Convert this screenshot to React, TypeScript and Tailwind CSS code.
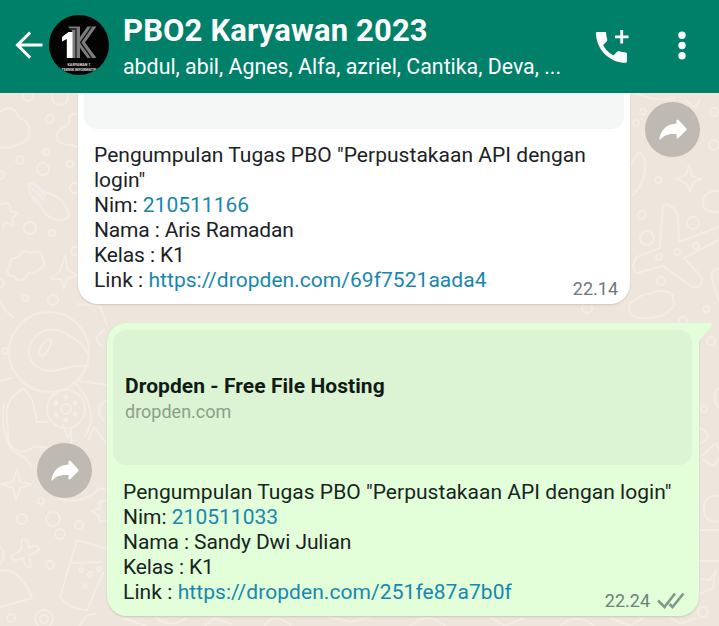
import React from "react";

function Wallpaper() {
  return (
    <svg className="absolute inset-0" width="719" height="533" viewBox="0 93 719 533" fill="none" stroke="#f4ede6" strokeWidth="2" strokeLinecap="round" strokeLinejoin="round">
      <path d="M0 112C5 108 10 107 14 110C18 112 17 117 21 119C28 121 31 128 29 135C27 142 22 143 17 145C11 147 8 149 0 147" />
      <path d="M77 114C73 113 69 115 69 119C70 123 69 125 64 127C57 130 55 136 58 141C62 146 69 143 77 147" />
      <path d="M29 184C36 181 39 192 51 194C61 197 67 207 69 215C66 221 58 222 50 217C43 213 42 207 37 203C31 199 28 190 29 184Z" />
      <path d="M31 187L44 200M36 186L45 195M31 195L41 204" stroke="#f1eae6" strokeWidth="3" />
      <path d="M0 204L9 203L11 211L17 213L12 219L14 226L5 222L3 228" />
      <path d="M22 252C26 249 29 255 34 252C39 251 43 254 43 259C46 264 43 269 38 270C35 273 32 275 29 272C24 282 17 282 14 276C6 277 6 271 10 267C8 261 12 257 17 258Z" />
      <path d="M65 256L68 270L77 275L67 279L64 289L61 279L51 279L60 271Z" />
      <path d="M0 301L4 309L13 317" />
      <circle cx="49" cy="352" r="40" />
      <path d="M45 330C34 335 28 345 29 354C31 366 42 371 51 371C62 371 66 364 88 366M45 330C60 327 81 340 88 354" />
      <path d="M50 339C44 340 37 350 40 355C45 360 54 341 50 339Z" />
      <path d="M0 381L12 378M79 381L108 385M23 389C13 394 7 402 7 414L8 439C12 451 21 456 33 447C42 445 47 450 53 447M23 389C33 394 34 408 37 422L47 422M4 404C1 422 5 438 10 447C14 457 26 452 31 467M76 384C91 399 96 420 85 436" />
      <circle cx="66" cy="409" r="19" /><circle cx="66" cy="409" r="5" />
      <g strokeWidth="3"><circle cx="66" cy="397" r="1" /><circle cx="75" cy="403" r="1" /><circle cx="75" cy="414" r="1" /><circle cx="66" cy="420" r="1" /><circle cx="56" cy="415" r="1" /><circle cx="56" cy="403" r="1" /></g>
      <path d="M63 425L68 438L71 430L71 445M88 440L94 427L106 443M108 400C98 403 96 414 104 420M58 498C75 504 92 498 99 488L107 490" />
      <path d="M17 469L20 482L32 484L20 488L16 500L13 488L1 484L13 482Z" />
      <path d="M108 500L99 502L100 508L92 511L99 516L100 522L107 520" />
      <path d="M22 540C24 536 28 539 29 548C36 543 42 548 37 552L29 555L31 565C29 569 25 568 23 558C15 562 9 559 13 555L21 550Z" />
      <path d="M77 540L107 549M77 540L60 597C65 605 76 609 87 610L103 573M71 563L101 562" />
      <path d="M0 571C15 567 27 583 32 598L0 607M0 546C5 553 5 558 0 564" />
      <circle cx="44" cy="619" r="9" /><circle cx="44" cy="619" r="4" /><path d="M95 614C85 613 83 621 80 626M124 618L146 626M156 617C164 625 176 626 186 618M205 626L214 618L231 624M265 626C270 615 283 617 291 626M329 617L350 622L369 617M410 626C425 614 434 617 445 626M490 617L505 626L524 618M561 625C574 615 585 618 594 626M611 618L630 626L644 617M671 618L681 624L696 618" />
      <path d="M639 152C650 160 646 181 633 195M639 152L629 166" />
      <path d="M689 164L692 176L701 179L693 183L690 192L686 183L676 179L686 175Z" />
      <path d="M719 191C706 190 702 198 703 206C707 213 713 211 719 212" />
      <path d="M663 205C668 203 676 208 678 216L679 242L719 227M663 205L660 248L637 257C632 263 632 271 637 273L663 266L692 287C700 288 703 283 702 278L684 258L719 240" />
      <path d="M639 298C641 293 653 294 657 291C666 291 675 292 673 300C677 309 667 311 664 315C654 317 643 321 633 316C627 311 627 302 639 298Z" />
      <path d="M719 269C712 269 710 273 712 279L719 303M634 93C644 95 656 104 675 97M686 100L695 108L700 100M78 304L100 306L107 326M104 330C96 335 94 341 102 346" />
      <path d="M719 388C713 392 713 402 719 408M700 428C710 432 709 441 700 443M702 456L716 443L719 452M703 460L714 466L719 458M719 496C708 493 703 502 704 511C705 520 712 523 719 521M700 530H719M700 561H719M702 579L710 580L716 570L713 588L700 594" />
      <g>
        <circle cx="28" cy="96" r="5" /><circle cx="60" cy="97" r="8" /><circle cx="50" cy="119" r="4" /><circle cx="46" cy="152" r="3" /><circle cx="20" cy="160" r="4" /><circle cx="43" cy="169" r="6" /><circle cx="70" cy="164" r="3" /><circle cx="0" cy="175" r="4" /><circle cx="30" cy="228" r="6" /><circle cx="52" cy="233" r="3" /><circle cx="75" cy="188" r="5" /><circle cx="75" cy="251" r="4" /><circle cx="0" cy="283" r="4" /><circle cx="25" cy="298" r="3" /><circle cx="53" cy="300" r="5" /><circle cx="5" cy="351" r="3" /><circle cx="41" cy="501" r="3" /><circle cx="22" cy="519" r="5" /><circle cx="53" cy="519" r="7" /><circle cx="79" cy="525" r="4" /><circle cx="60" cy="534" r="5" /><circle cx="50" cy="565" r="4" /><circle cx="81" cy="570" r="2" /><circle cx="90" cy="574" r="2" /><circle cx="99" cy="569" r="2" /><circle cx="85" cy="586" r="2" /><circle cx="11" cy="618" r="4" />
        <circle cx="643" cy="112" r="3" /><circle cx="636" cy="123" r="3" /><circle cx="714" cy="112" r="4" /><circle cx="714" cy="145" r="5" /><circle cx="658" cy="180" r="3" /><circle cx="642" cy="215" r="4" /><circle cx="693" cy="223" r="6" /><circle cx="647" cy="238" r="7" /><circle cx="677" cy="252" r="3" /><circle cx="659" cy="257" r="3" /><circle cx="696" cy="246" r="3" /><circle cx="661" cy="281" r="4" /><circle cx="706" cy="309" r="3" /><circle cx="587" cy="308" r="5" /><circle cx="683" cy="321" r="4" /><circle cx="711" cy="341" r="4" /><circle cx="704" cy="409" r="3" /><circle cx="703" cy="612" r="5" />
      </g>
    </svg>
  );
}

function ForwardButton({ className }: { className: string }) {
  return (
    <button aria-label="Forward" className={`flex size-[55px] shrink-0 items-center justify-center rounded-full bg-[#bebab3] ${className}`}>
      <svg width="55" height="55" viewBox="0 0 55 55" fill="#fff">
        <path d="M14.2 37.5C16 27 22 22 31.5 21.5V18.5Q32 17 33.5 18L41.2 26.2Q42 27.2 41.2 28.2L33.5 36Q32 37 31.5 35.5V32C24 31.5 19 33 14.7 37.8Z" />
      </svg>
    </button>
  );
}

function Avatar() {
  return (
    <svg className="ml-[5px] shrink-0" width="60" height="60" viewBox="0 0 60 60">
      <defs>
        <clipPath id="disc"><circle cx="30" cy="30" r="30" /></clipPath>
      </defs>
      <g clipPath="url(#disc)">
        <rect width="60" height="60" fill="#030303" />
        <path d="M19 11.5H31V22L38.5 11.5H47.5L36 27.5L47.5 43H38.5L31 33V43H23V16Z" fill="#7d7d7d" />
        <path d="M20 14L27 14V43M42.5 12L31.5 27.5L42.5 43" fill="none" stroke="#1c1c1c" strokeWidth="1.3" />
        <path d="M13 22L19.5 17H23.5V43H17.8V24L13 26.5Z" fill="#fff" />
        <text x="30" y="50.8" textAnchor="middle" fill="#c4c4c4" fontFamily="Roboto, sans-serif" fontWeight="900" fontSize="3.8" textLength="23">KARYAWAN 1</text>
        <text x="30" y="55.8" textAnchor="middle" fill="#c4c4c4" fontFamily="Roboto, sans-serif" fontWeight="900" fontSize="3.8" textLength="35">TEKNIK INFORMATIK</text>
      </g>
    </svg>
  );
}

function Header() {
  return (
    <header className="flex h-[93px] items-start bg-[#008069] text-white">
      <button aria-label="Back" className="mt-[31px] ml-[15px] shrink-0">
        <svg width="29" height="29" viewBox="0 0 29 29" fill="none" stroke="#fff" strokeWidth="3">
          <path d="M27.5 14H3M15.2 1.5L2.5 14L15.2 26.8" />
        </svg>
      </button>
      <div className="mt-[15px]"><Avatar /></div>
      <div className="mt-[12px] ml-[14px] w-[450px] shrink-0 whitespace-nowrap">
        <h1 className="text-[31px] leading-[37px] font-bold tracking-[0.15px]"><span>PBO2 Karyawan 2023</span></h1>
        <p className="mt-[5px] text-[21.35px] leading-[26px]"><span>abdul, abil, Agnes, Alfa, azriel, Cantika, Deva, ...</span></p>
      </div>
      <svg className="mt-[27px] ml-[20px] shrink-0" width="38" height="38" viewBox="0 0 38 38" fill="#fff">
        <path d="M4 5H12.2Q13 5 13.1 6.2Q13.4 10 14.3 12.3Q14.6 13.6 13.6 14.5L10.1 18Q13.6 25 20.4 28.4L24.1 24.7Q25 23.9 26.2 24.3Q29 25.3 32.7 25.4Q33.9 25.5 33.9 26.5V34.8Q33.9 35.8 32.9 35.8C16 35.8 3 22 3 6Q3 5 4 5Z" />
        <path d="M28.7 3V16.5M22 9.8H35.5" stroke="#fff" strokeWidth="2.8" />
      </svg>
      <svg className="mt-[30px] ml-[45px] shrink-0" width="12" height="32" viewBox="0 0 12 32" fill="#fff">
        <circle cx="6" cy="5.2" r="3.7" /><circle cx="6" cy="15.5" r="3.7" /><circle cx="6" cy="25.8" r="3.7" />
      </svg>
    </header>
  );
}

function Link({ children }: { children: string }) {
  return <span className="text-[#1787ae]">{children}</span>;
}

export default function App() {
  return (
    <div className="h-[626px] w-[719px] overflow-hidden bg-[#eee5dc] font-[Roboto,sans-serif]">
      <Header />
      <main className="relative h-[533px] overflow-hidden">
        <Wallpaper />
        <div className="relative flex items-start pl-[78px]">
          <section className="relative h-[211px] w-[552px] rounded-b-[20px] bg-white px-[6px] shadow-[0_1px_2px_#cfc6bd]">
            <div className="h-[36px] rounded-b-[13px] bg-[#f4f6f6]" />
            <div className="mt-[14px] pl-[10px] text-[21px] leading-[25px] whitespace-nowrap text-[#1b2226]">
              <p className="tracking-[0.03px]">Pengumpulan Tugas PBO "Perpustakaan API dengan</p>
              <p>login"</p>
              <p>Nim: <Link>210511166</Link></p>
              <p className="tracking-[-0.16px]">Nama : Aris Ramadan</p>
              <p className="tracking-[-0.12px]">Kelas : K1</p>
              <p className="tracking-[0.04px]">Link : <Link>https://dropden.com/69f7521aada4</Link></p>
            </div>
            <time className="absolute right-[12px] bottom-[4px] text-[18px] leading-[22px] text-[#6d7980]">22.14</time>
          </section>
          <ForwardButton className="mt-[9px] ml-[15px]" />
        </div>
        <div className="relative mt-[19px] flex items-start pl-[37px]">
          <ForwardButton className="mt-[120px] mr-[15px]" />
          <section className="relative h-[293px] w-[592px] rounded-[20px] rounded-tr-none bg-[#e2ffd9] px-[6px] pt-[7px] shadow-[0_1px_2px_#cbc8b8]">
            <svg className="absolute top-0 left-[591px]" width="15" height="19" viewBox="0 0 15 19">
              <path d="M0 0H11.5Q15 1 13 4L1 18H0Z" fill="#e2ffd9" />
            </svg>
            <div className="h-[135px] w-[579px] rounded-[13px] bg-[#dcf4d3] pt-[43px] pl-[12px] whitespace-nowrap">
              <h2 className="text-[21px] leading-[26px] font-bold tracking-[0.06px] text-[#111b16]"><span>Dropden - Free File Hosting</span></h2>
              <p className="text-[18px] leading-[25px] text-[#8d9e8c]"><span>dropden.com</span></p>
            </div>
            <div className="mt-[15px] pl-[10px] text-[21px] leading-[25px] whitespace-nowrap text-[#17251d]">
              <p className="tracking-[0.03px]">Pengumpulan Tugas PBO "Perpustakaan API dengan login"</p>
              <p>Nim: <Link>210511033</Link></p>
              <p className="tracking-[-0.1px]">Nama : Sandy Dwi Julian</p>
              <p className="tracking-[-0.12px]">Kelas : K1</p>
              <p className="tracking-[0.07px]">Link : <Link>https://dropden.com/251fe87a7b0f</Link></p>
            </div>
            <div className="absolute right-[14px] bottom-[4px] flex items-center gap-[6px] text-[18px] leading-[22px] text-[#6d8178]">
              <time>22.24</time>
              <svg width="29" height="20" viewBox="0 0 29 20" fill="none" stroke="#80988f" strokeWidth="2.6">
                <path d="M2 9.5L8.5 16L19 2.5M13.5 13L16.5 16L27.5 2.5" />
              </svg>
            </div>
          </section>
        </div>
      </main>
    </div>
  );
}
